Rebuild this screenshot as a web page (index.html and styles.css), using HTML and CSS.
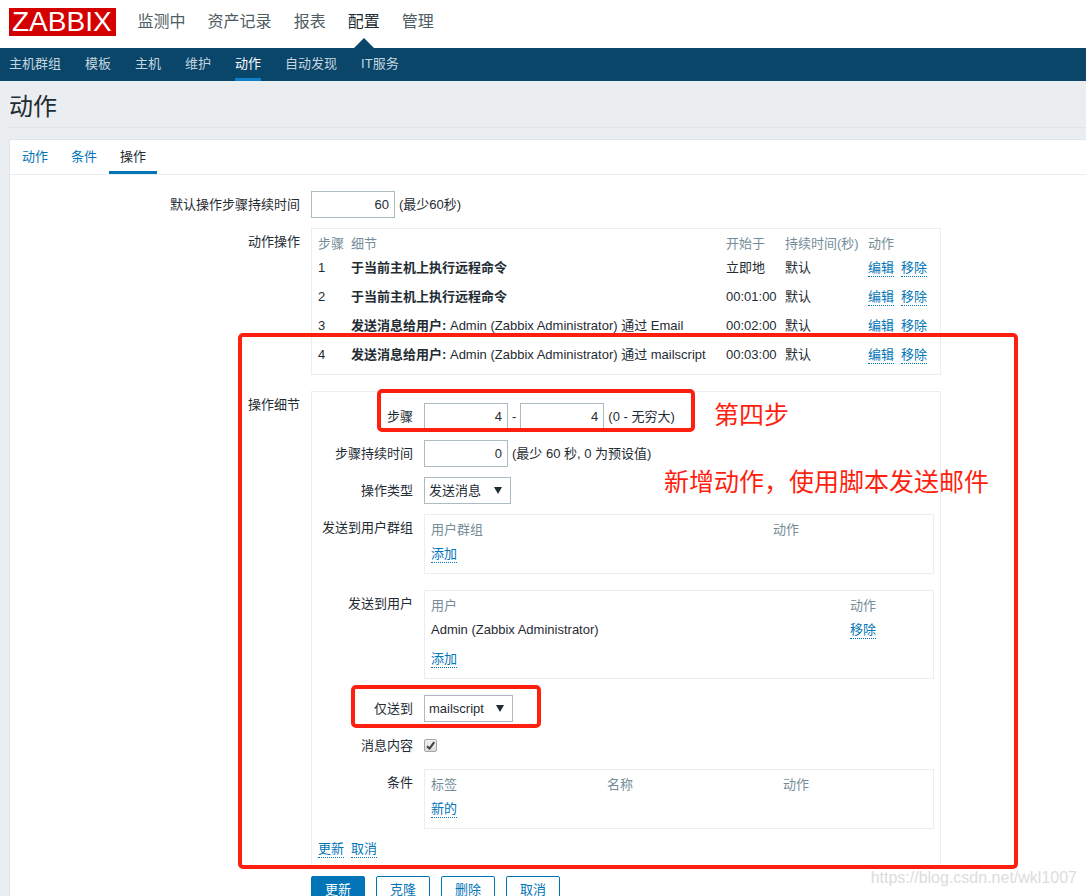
FILE: index.html
```html
<!DOCTYPE html>
<html lang="zh-CN">
<head>
<meta charset="utf-8">
<meta name="viewport" content="width=device-width, initial-scale=1">
<title>动作</title>
<link rel="stylesheet" href="styles.css">
</head>
<body>
<div class="page">
  <header class="top">
    <a class="logo" href="#">ZABBIX</a>
    <nav class="main-nav">
      <a href="#">监测中</a>
      <a href="#">资产记录</a>
      <a href="#">报表</a>
      <a href="#" class="selected">配置</a>
      <a href="#">管理</a>
    </nav>
  </header>
  <nav class="sub-nav">
    <a href="#">主机群组</a>
    <a href="#">模板</a>
    <a href="#">主机</a>
    <a href="#">维护</a>
    <a href="#" class="selected">动作</a>
    <a href="#">自动发现</a>
    <a href="#">IT服务</a>
  </nav>

  <main class="content">
    <h1 class="title">动作</h1>
    <div class="panel">
      <nav class="tabs">
        <a href="#">动作</a>
        <a href="#">条件</a>
        <a href="#" class="selected">操作</a>
      </nav>

      <form class="form">
        <label class="label" for="period">默认操作步骤持续时间</label>
        <div class="field"><input class="number" id="period" type="text" value="60"><span>(最少60秒)</span></div>

        <span class="label">动作操作</span>
        <div class="box spaced">
          <table class="list">
            <colgroup><col class="c-step"><col class="c-detail"><col class="c-start"><col class="c-duration"><col></colgroup>
            <thead><tr><th>步骤</th><th>细节</th><th>开始于</th><th>持续时间(秒)</th><th>动作</th></tr></thead>
            <tbody>
              <tr><td>1</td><td><b>于当前主机上执行远程命令</b></td><td>立即地</td><td>默认</td><td><div class="links"><a href="#">编辑</a><a href="#">移除</a></div></td></tr>
              <tr><td>2</td><td><b>于当前主机上执行远程命令</b></td><td>00:01:00</td><td>默认</td><td><div class="links"><a href="#">编辑</a><a href="#">移除</a></div></td></tr>
              <tr><td>3</td><td><b>发送消息给用户:</b> Admin (Zabbix Administrator) 通过 Email</td><td>00:02:00</td><td>默认</td><td><div class="links"><a href="#">编辑</a><a href="#">移除</a></div></td></tr>
              <tr><td>4</td><td><b>发送消息给用户:</b> Admin (Zabbix Administrator) 通过 mailscript</td><td>00:03:00</td><td>默认</td><td><div class="links"><a href="#">编辑</a><a href="#">移除</a></div></td></tr>
            </tbody>
          </table>
        </div>

        <span class="label">操作细节</span>
        <div class="box details">
          <div class="detail-grid">
            <label class="label" for="step-from">步骤</label>
            <div class="field"><input class="number" id="step-from" type="text" value="4"><span>-</span><input class="number" type="text" value="4" aria-label="步骤"><span>(0 - 无穷大)</span></div>

            <label class="label" for="step-period">步骤持续时间</label>
            <div class="field"><input class="number" id="step-period" type="text" value="0"><span>(最少 60 秒, 0 为预设值)</span></div>

            <label class="label" for="op-type">操作类型</label>
            <div class="field">
              <span class="select"><select id="op-type"><option>发送消息</option></select><svg class="arrow" viewBox="0 0 8 7"><path d="M0 0h8L4 7z"/></svg></span>
            </div>

            <span class="label">发送到用户群组</span>
            <div class="box spaced">
              <table class="list">
                <colgroup><col class="c-group"><col></colgroup>
                <thead><tr><th>用户群组</th><th>动作</th></tr></thead>
                <tbody><tr><td><a href="#">添加</a></td><td></td></tr></tbody>
              </table>
            </div>

            <span class="label">发送到用户</span>
            <div class="box spaced">
              <table class="list">
                <colgroup><col class="c-user"><col></colgroup>
                <thead><tr><th>用户</th><th>动作</th></tr></thead>
                <tbody>
                  <tr><td>Admin (Zabbix Administrator)</td><td><a href="#">移除</a></td></tr>
                  <tr><td><a href="#">添加</a></td><td></td></tr>
                </tbody>
              </table>
            </div>

            <label class="label" for="media">仅送到</label>
            <div class="field">
              <span class="select"><select id="media"><option>mailscript</option></select><svg class="arrow" viewBox="0 0 8 7"><path d="M0 0h8L4 7z"/></svg></span>
            </div>

            <label class="label" for="message">消息内容</label>
            <div class="field">
              <span class="check"><input id="message" type="checkbox" checked><svg class="tick" viewBox="0 0 13 13"><path d="M3 7.2l2.6 2.4L10.2 3.2"/></svg></span>
            </div>

            <span class="label">条件</span>
            <div class="box">
              <table class="list">
                <colgroup><col class="c-cond"><col class="c-cond"><col></colgroup>
                <thead><tr><th>标签</th><th>名称</th><th>动作</th></tr></thead>
                <tbody><tr><td><a href="#">新的</a></td><td></td><td></td></tr></tbody>
              </table>
            </div>
          </div>
          <div class="links detail-actions"><a href="#">更新</a><a href="#">取消</a></div>
        </div>

        <div class="buttons">
          <button type="button" class="primary">更新</button>
          <button type="button">克隆</button>
          <button type="button">删除</button>
          <button type="button">取消</button>
        </div>
      </form>
    </div>
  </main>

  <div class="mark mark-all"></div>
  <div class="mark mark-step"></div>
  <div class="mark mark-media"></div>
  <p class="note note-step">第四步</p>
  <p class="note note-script">新增动作，使用脚本发送邮件</p>
  <p class="watermark">https://blog.csdn.net/wkl1007</p>
</div>
</body>
</html>
```

FILE: styles.css
```css
* { box-sizing: border-box; }

body {
  margin: 0;
  background: #ebeef0;
  color: #1f2c33;
  font: 13px/17px "Liberation Sans", "Noto Sans CJK SC", sans-serif;
}

a { color: #0275b8; text-decoration: none; }

.page { position: relative; }

/* Header */
.top {
  display: flex;
  align-items: flex-start;
  gap: 22px;
  height: 48px;
  padding: 8px 9px;
  background: #fff;
}

.logo {
  padding: 0 4px 0 3px;
  background: #d40000;
  color: #fff;
  font-size: 28px;
  line-height: 28px;
}

.main-nav { display: flex; gap: 22px; }

.main-nav a {
  position: relative;
  height: 40px;
  color: #4f5c63;
  font-size: 16px;
  line-height: 28px;
}

.main-nav .selected { color: #1f2c33; }

.main-nav .selected::after {
  content: "";
  position: absolute;
  bottom: 0;
  left: 6px;
  border: 10px solid transparent;
  border-top: 0;
  border-bottom-color: #0a466a;
}

.sub-nav {
  display: flex;
  gap: 24px;
  padding: 0 9px;
  background: #0a466a;
}

.sub-nav a {
  height: 33px;
  border-bottom: 3px solid transparent;
  color: #c5d5df;
  line-height: 32px;
}

.sub-nav .selected { border-bottom-color: #0f81c7; color: #fff; }

/* Page body */
.content { padding-left: 9px; }

.title {
  margin: 0 0 11px;
  padding: 10px 0 5px;
  border-bottom: 1px solid #dfe4e7;
  font-size: 24px;
  font-weight: 400;
  line-height: 31px;
}

.panel {
  border: solid #dfe4e7;
  border-width: 1px 0 0 1px;
  background: #fff;
}

.tabs {
  display: flex;
  gap: 1px;
  padding-left: 1px;
  border-bottom: 1px solid #ebeef0;
}

.tabs a {
  height: 34px;
  padding: 0 11px;
  border-bottom: 3px solid transparent;
  line-height: 34px;
}

.tabs .selected { border-bottom-color: #0275b8; color: #1f2c33; }

.form {
  display: grid;
  grid-template-columns: 290px minmax(0, 630px);
  gap: 10px 11px;
  padding: 16px 0 20px;
}

.label { line-height: 27px; text-align: right; }

.field {
  display: flex;
  align-items: center;
  gap: 4px;
  height: 27px;
}

.number,
.select select {
  height: 27px;
  border: 1px solid #acbbc2;
  border-radius: 0;
  background: #fff;
  color: inherit;
  font: inherit;
}

.number {
  width: 84px;
  padding: 0 5px;
  text-align: right;
}

.select { position: relative; }

.select select {
  appearance: none;
  padding: 0 28px 0 4px;
}

.arrow {
  position: absolute;
  top: 10px;
  right: 9px;
  width: 8px;
  height: 7px;
  fill: #1f2c33;
  pointer-events: none;
}

.check { position: relative; height: 13px; }

.check input {
  appearance: none;
  display: block;
  width: 13px;
  height: 13px;
  margin: 0;
  border: 1px solid #a6a6a6;
  border-radius: 2px;
  background: linear-gradient(#f0f0f0, #dcdcdc);
}

.tick {
  position: absolute;
  inset: 0;
  fill: none;
  stroke: #404040;
  stroke-width: 2;
  pointer-events: none;
}

.check input:not(:checked) + .tick { display: none; }

.box { padding: 5px 6px; border: 1px solid #ebeef0; }
.spaced { margin-bottom: 6px; }

.details { padding: 11px 6px 7px; }

.detail-grid {
  display: grid;
  grid-template-columns: 95px minmax(0, 1fr);
  gap: 10px 11px;
}

.detail-actions { margin-top: 11px; }

/* Lists */
.list {
  width: 100%;
  border-collapse: collapse;
  table-layout: fixed;
}

.list th {
  height: 19px;
  padding: 0;
  color: #768d99;
  font-weight: 400;
  text-align: left;
}

.list td { height: 29px; padding: 0; white-space: nowrap; }

.list a,
.links a {
  display: inline-block;
  border-bottom: 1px dotted #0275b8;
}

.links { display: flex; gap: 7px; }

.c-step { width: 33px; }
.c-detail { width: 375px; }
.c-start { width: 59px; }
.c-duration { width: 83px; }
.c-group { width: 342px; }
.c-user { width: 419px; }
.c-cond { width: 176px; }

.buttons { display: flex; grid-column: 2; gap: 11px; }

.buttons button {
  height: 27px;
  padding: 0 13px;
  border: 1px solid #0275b8;
  border-radius: 2px;
  background: #fff;
  color: #0275b8;
  font: inherit;
}

.buttons .primary { background: #0275b8; color: #fff; }

/* Annotations drawn over the page */
.mark {
  position: absolute;
  border: 4px solid #ff1f10;
  border-radius: 5px;
  pointer-events: none;
}

.mark-all { top: 333px; left: 238px; width: 780px; height: 536px; }
.mark-step { top: 389px; left: 377px; width: 318px; height: 43px; }
.mark-media { top: 685px; left: 351px; width: 190px; height: 43px; }

.note {
  position: absolute;
  margin: 0;
  color: #ff1f10;
  font-size: 25px;
  line-height: 32px;
  white-space: nowrap;
}

.note-step { top: 399px; left: 714px; }
.note-script { top: 466px; left: 664px; }

.watermark {
  position: absolute;
  top: 868px;
  right: 9px;
  margin: 0;
  color: #dcdcdc;
  font-size: 16px;
  line-height: 20px;
}
```
